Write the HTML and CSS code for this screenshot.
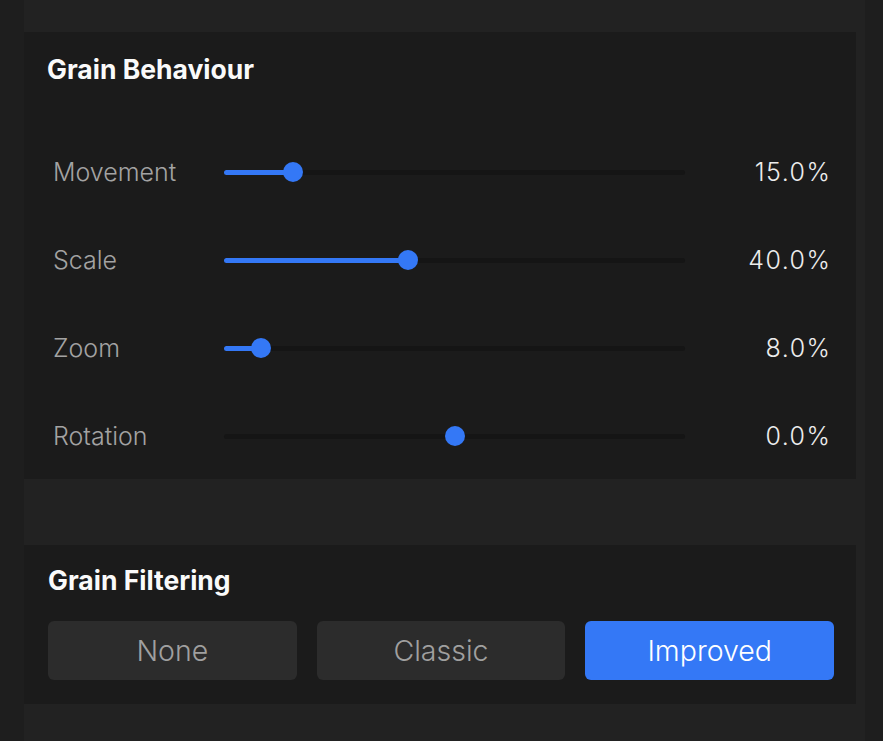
FILE: index.html
```html
<!DOCTYPE html>
<html>
<head>
    <meta charset="UTF-8">
    <title>Grain</title>
    <link rel="stylesheet" href="styles.css">
</head>
<body>
<div class="panel">

    <div class="card behaviour">
        <h2 class="card_title">Grain Behaviour</h2>

        <div class="slider_row">
            <span class="label">Movement</span>
            <div class="slider">
                <div class="fill" style="width: 15%"></div>
                <div class="thumb" style="left: 15%"></div>
            </div>
            <span class="value">15.0%</span>
        </div>

        <div class="slider_row">
            <span class="label">Scale</span>
            <div class="slider">
                <div class="fill" style="width: 40%"></div>
                <div class="thumb" style="left: 40%"></div>
            </div>
            <span class="value">40.0%</span>
        </div>

        <div class="slider_row">
            <span class="label">Zoom</span>
            <div class="slider">
                <div class="fill" style="width: 8%"></div>
                <div class="thumb" style="left: 8%"></div>
            </div>
            <span class="value">8.0%</span>
        </div>

        <div class="slider_row">
            <span class="label">Rotation</span>
            <div class="slider">
                <div class="thumb" style="left: 50%"></div>
            </div>
            <span class="value">0.0%</span>
        </div>
    </div>

    <div class="card filtering">
        <h2 class="card_title">Grain Filtering</h2>
        <div class="btn_group">
            <button type="button">None</button>
            <button type="button">Classic</button>
            <button type="button" class="active">Improved</button>
        </div>
    </div>

</div>
</body>
</html>
```

FILE: styles.css
```css
html, body {
    margin: 0;
    height: 100%;
}

body {
    background: #1e1e1e;
    font-family: Inter, "Open Sans", Arial, sans-serif;
    color: #e6e6e6;
}

.panel {
    margin-left: 24px;
    width: 841px;
    min-height: 100%;
    padding-top: 32px;
    box-sizing: border-box;
    background: #222222;
}

.card {
    width: 832px;
    background: #1b1b1b;
}

.card_title {
    margin: 0;
    font-size: 26.5px;
    font-weight: 700;
    line-height: 30px;
    color: #fafafa;
}

.behaviour {
    height: 447px;
    padding-top: 22px;
    box-sizing: border-box;
}

.behaviour .card_title {
    padding-left: 23px;
    margin-bottom: 44px;
}

.slider_row {
    display: grid;
    grid-template-columns: 171px 461px 1fr;
    align-items: center;
    height: 88px;
    padding: 0 26px 0 29px;
}

.slider_row .label {
    font-size: 25px;
    font-weight: 300;
    color: #a3a3a3;
}

.slider_row .value {
    text-align: right;
    font-size: 25px;
    font-weight: 300;
    letter-spacing: 1.5px;
    margin-right: -1.5px;
    color: #ececec;
}

.slider {
    position: relative;
    height: 5px;
    border-radius: 3px;
    background: #151515;
}

.slider .fill {
    height: 100%;
    border-radius: 3px;
    background: #3478f6;
}

.slider .thumb {
    position: absolute;
    top: 50%;
    width: 20px;
    height: 20px;
    margin: -10px 0 0 -10px;
    border-radius: 50%;
    background: #3478f6;
}

.filtering {
    margin-top: 66px;
    padding: 20px 22px 24px 24px;
    box-sizing: border-box;
    height: 159px;
}

.filtering .card_title {
    margin-bottom: 26px;
}

.btn_group {
    display: flex;
    gap: 20px;
}

.btn_group button {
    flex: 1;
    height: 59px;
    border: none;
    border-radius: 6px;
    background: #2c2c2c;
    color: #a0a0a0;
    font-family: Inter, "Open Sans", Arial, sans-serif;
    font-size: 28.5px;
    font-weight: 300;
    cursor: pointer;
}

.btn_group button.active {
    background: #3478f6;
    color: #ffffff;
}
```
